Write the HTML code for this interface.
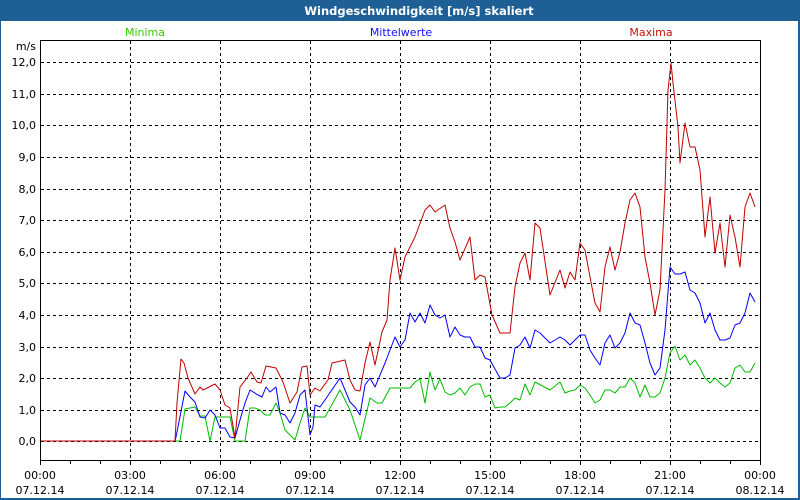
<!DOCTYPE html>
<html><head><meta charset="utf-8"><style>
html,body{margin:0;padding:0;background:#fff}
svg{display:block}
text{font-family:"DejaVu Sans","Liberation Sans",sans-serif;font-size:11px}
</style></head><body>
<svg width="800" height="500" xmlns="http://www.w3.org/2000/svg">
<rect x="0" y="0" width="800" height="500" fill="#fff"/>
<rect x="0" y="0" width="800" height="21" fill="#1e6096"/>
<rect x="0" y="0" width="1" height="500" fill="#1e6096"/>
<rect x="798" y="0" width="2" height="500" fill="#1e6096"/>
<rect x="0" y="498" width="800" height="2" fill="#1e6096"/>
<text x="419" y="15" fill="#fff" text-anchor="middle" font-weight="bold" style="font-size:11.5px">Windgeschwindigkeit [m/s] skaliert</text>
<text x="145" y="36" fill="#33cc00" text-anchor="middle">Minima</text>
<text x="401" y="36" fill="#1010ff" text-anchor="middle">Mittelwerte</text>
<text x="651" y="36" fill="#c81010" text-anchor="middle">Maxima</text>
<text x="36" y="50" text-anchor="end" fill="#000">m/s</text>
<g stroke="#000" stroke-width="1" stroke-dasharray="3,3" fill="none" shape-rendering="crispEdges">
<path d="M130.5 41V460M220.5 41V460M310.5 41V460M400.5 41V460M490.5 41V460M580.5 41V460M670.5 41V460"/>
<path d="M41 62.5H760M41 94.5H760M41 125.5H760M41 157.5H760M41 189.5H760M41 220.5H760M41 252.5H760M41 283.5H760M41 315.5H760M41 347.5H760M41 378.5H760M41 410.5H760M41 441.5H760"/>
</g>
<g fill="#000" text-anchor="end">
<text x="36" y="66">12,0</text><text x="36" y="98">11,0</text><text x="36" y="129">10,0</text>
<text x="36" y="161">9,0</text><text x="36" y="193">8,0</text><text x="36" y="224">7,0</text>
<text x="36" y="256">6,0</text><text x="36" y="287">5,0</text><text x="36" y="319">4,0</text>
<text x="36" y="351">3,0</text><text x="36" y="382">2,0</text><text x="36" y="414">1,0</text>
<text x="36" y="445">0,0</text>
</g>
<g stroke="#000" shape-rendering="crispEdges">
<path d="M40.5 40.5H760.5V460.5H40.5Z" fill="none"/>
<path d="M40.5 460V465M70.5 460V464M100.5 460V464M130.5 460V465M160.5 460V464M190.5 460V464M220.5 460V465M250.5 460V464M280.5 460V464M310.5 460V465M340.5 460V464M370.5 460V464M400.5 460V465M430.5 460V464M460.5 460V464M490.5 460V465M520.5 460V464M550.5 460V464M580.5 460V465M610.5 460V464M640.5 460V464M670.5 460V465M700.5 460V464M730.5 460V464M760.5 460V465"/>
</g>
<g fill="#000" text-anchor="middle">
<text x="40" y="479">00:00</text><text x="40" y="494">07.12.14</text>
<text x="130" y="479">03:00</text><text x="130" y="494">07.12.14</text>
<text x="220" y="479">06:00</text><text x="220" y="494">07.12.14</text>
<text x="310" y="479">09:00</text><text x="310" y="494">07.12.14</text>
<text x="400" y="479">12:00</text><text x="400" y="494">07.12.14</text>
<text x="490" y="479">15:00</text><text x="490" y="494">07.12.14</text>
<text x="580" y="479">18:00</text><text x="580" y="494">07.12.14</text>
<text x="670" y="479">21:00</text><text x="670" y="494">07.12.14</text>
<text x="760" y="479">00:00</text><text x="760" y="494">08.12.14</text>
</g>
<g fill="none" stroke-width="1" stroke-linejoin="round">
<polyline stroke="#00bb00" points="41,441 180,441 185,409 195,407 200,416 205,416 210,441 215,417 230,417 235,441 245,441 250,408 255,408 260,410 265,415 270,415 276,403 280,413 285,430 295,440 300,423 305,408 310,417 325,417 340,390 350,410 360,440 370,398 377,403 382,403 390,388 410,388 415,382 420,379 425,403 430,372 435,390 440,379 445,392 450,395 455,393 460,388 465,395 470,387 475,384 480,384 485,397 490,395 495,408 500,407 505,407 510,403 515,398 520,400 525,384 530,395 535,382 550,390 560,382 565,393 570,391 575,390 580,385 585,388 590,395 595,403 600,400 605,390 610,390 615,393 620,387 625,387 630,378 635,383 640,397 645,385 650,397 655,397 660,393 665,378 670,353 675,346 680,360 685,355 690,365 695,360 700,368 705,378 710,383 715,378 720,383 725,387 730,383 735,368 740,365 745,372 750,372 755,363"/>
<polyline stroke="#0000ff" points="41,441 175,441 176,437 185,391 190,397 195,402 200,417 205,418 210,410 215,415 220,428 225,428 230,437 235,438 240,420 245,403 250,390 258,395 262,397 266,387 270,392 276,387 280,413 285,415 290,423 295,413 300,395 305,390 310,435 313,427 315,405 320,407 325,400 340,378 350,402 355,407 360,415 365,385 370,378 375,387 385,363 395,337 400,347 405,340 410,313 415,322 420,313 425,323 430,305 435,315 440,318 445,315 450,337 455,327 460,335 465,337 470,337 475,347 480,347 485,358 490,360 500,378 505,378 510,375 515,348 520,345 525,337 530,348 535,330 540,333 550,343 560,337 565,340 570,345 575,340 580,335 585,335 590,350 595,358 600,365 605,343 610,335 615,348 620,343 625,333 630,313 635,323 640,325 645,343 650,363 655,375 660,368 665,330 670,267 675,274 680,274 685,272 690,290 695,293 700,303 705,323 710,313 715,330 720,340 725,340 730,338 735,325 740,323 745,313 750,293 755,302"/>
<polyline stroke="#c00000" points="41,441 175,441 177,403 181,359 184,363 188,378 195,394 200,387 203,390 215,384 220,390 225,405 230,408 235,438 240,387 247,378 251,372 257,382 261,383 266,366 276,368 283,382 290,403 297,392 302,367 307,366 310,395 315,388 320,391 328,380 332,363 345,360 350,380 355,390 360,391 365,363 370,342 375,365 382,332 387,320 390,280 395,248 400,280 405,257 415,237 425,210 430,205 435,212 445,205 450,228 455,242 460,260 470,237 475,280 480,275 485,277 492,315 500,333 510,333 515,287 520,263 525,253 530,280 535,223 540,228 550,295 560,270 565,288 570,272 575,280 580,243 585,250 590,277 595,303 600,312 605,267 610,247 615,270 620,252 625,223 630,200 635,193 640,207 645,257 650,283 655,315 660,290 665,190 668,90 671,63 673,83 678,127 680,163 685,123 690,147 695,147 700,170 705,237 710,197 715,253 720,223 725,267 730,215 735,237 740,267 745,207 750,193 755,207"/>
</g>
</svg>
</body></html>
